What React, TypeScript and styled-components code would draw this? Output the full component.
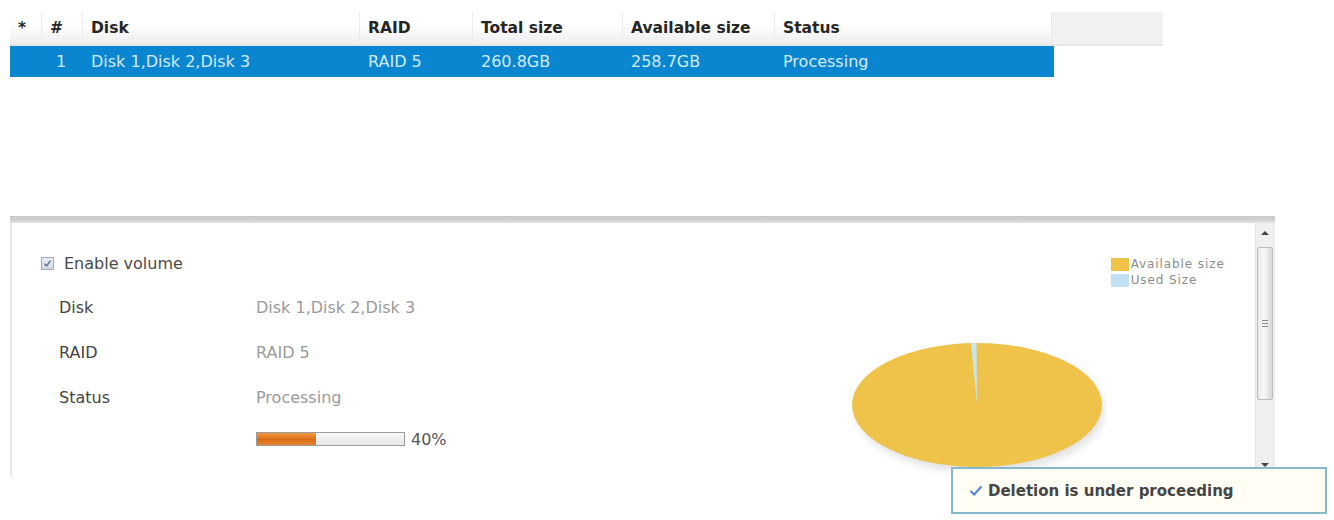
import React from 'react';
import styled, { createGlobalStyle } from 'styled-components';

const GlobalStyle = createGlobalStyle`
  body {
    margin: 0;
    background: #fff;
    font-family: "DejaVu Sans", Verdana, sans-serif;
  }
`;

const Page = styled.div`
  position: relative;
  width: 1334px;
  height: 520px;
  padding: 12px 0 0 10px;
  box-sizing: border-box;
  overflow: hidden;
`;

// ---- volume list ----

const ListArea = styled.div`
  height: 204px;
  width: 1153px;
`;

const cols = '32px 41px 277px 113px 150px 152px 277px 111px';

const HeadRow = styled.div`
  display: grid;
  grid-template-columns: ${cols};
  height: 32px;
  border-bottom: 2px solid #e6e6e6;
`;

const HeadCell = styled.div<{ $filler?: boolean }>`
  display: flex;
  align-items: center;
  padding-left: 8px;
  font-size: 15.5px;
  font-weight: bold;
  color: #262626;
  background: ${(p) => (p.$filler ? '#f1f1f1' : 'linear-gradient(#ffffff, #ffffff 40%, #ededed)')};
  border-right: 1px solid ${(p) => (p.$filler ? 'transparent' : '#ececec')};
`;

const BodyRow = styled.div<{ $selected?: boolean }>`
  display: grid;
  grid-template-columns: 32px 41px 277px 113px 150px 152px 279px;
  width: 1044px;
  height: 31px;
  background: ${(p) => (p.$selected ? '#0a86d0' : 'transparent')};
  color: ${(p) => (p.$selected ? '#d3ebf8' : '#333')};
  font-size: 16px;
`;

const BodyCell = styled.div<{ $pad?: number }>`
  display: flex;
  align-items: center;
  padding-left: ${(p) => p.$pad ?? 8}px;
  white-space: nowrap;
`;

// ---- splitter + detail panel ----

const Splitter = styled.div`
  width: 1265px;
  height: 7px;
  background: linear-gradient(#c9c9c9, #d2d2d2 60%, #e4e4e4);
`;

const DetailPanel = styled.div`
  display: flex;
  width: 1265px;
  height: 254px;
  border-left: 2px solid #e8e8e8;
  box-sizing: border-box;
`;

const Info = styled.div`
  width: 844px;
  padding: 32px 0 0 29px;
  box-sizing: border-box;
  color: #4a4a4a;
  font-size: 16px;
`;

const CheckRow = styled.label`
  display: flex;
  align-items: center;
  gap: 10px;
  height: 16px;
`;

const CheckBox = styled.span`
  width: 11px;
  height: 11px;
  border: 1px solid #a8a8b4;
  background: linear-gradient(#e9edf3, #d3d9e3);
  display: flex;
  align-items: center;
  justify-content: center;
`;

const Fields = styled.div`
  display: grid;
  grid-template-columns: 197px auto;
  grid-template-rows: 45px 45px 45px 38px;
  align-items: center;
  margin: 14px 0 0 18px;
`;

const FieldLabel = styled.div`
  color: #444;
`;

const FieldValue = styled.div`
  color: #9a9a9a;
`;

const ProgressWrap = styled.div`
  display: flex;
  align-items: center;
  gap: 6px;
  color: #555;
`;

const Track = styled.div`
  width: 147px;
  height: 12px;
  border: 1px solid #9c9c9c;
  background: linear-gradient(#f8f8f8, #e6e6e6);
`;

const Fill = styled.div`
  height: 100%;
  background: linear-gradient(#f19a45, #d96c14 55%, #e98432);
`;

const ChartArea = styled.div`
  display: flex;
  align-items: flex-start;
  width: 410px;
`;

const Pie = styled.svg`
  margin-top: 115px;
  flex: none;
`;

const Legend = styled.div`
  margin: 33px 0 0 4px;
  font-size: 12px;
  letter-spacing: 0.9px;
  color: #8c8c8c;
  line-height: 16px;
`;

const LegendItem = styled.div`
  display: flex;
  align-items: center;
  gap: 2px;
`;

const Swatch = styled.span<{ $color: string }>`
  width: 18px;
  height: 13px;
  background: ${(p) => p.$color};
`;

const ScrollBar = styled.div`
  position: relative;
  width: 19px;
  height: 100%;
  background: #efefef;
  border-left: 1px solid #e2e2e2;
  flex: none;
`;

const Arrow = styled.div<{ $down?: boolean }>`
  position: absolute;
  left: 5px;
  ${(p) => (p.$down ? 'top: 240px;' : 'top: 8px;')}
  width: 0;
  height: 0;
  border-left: 4px solid transparent;
  border-right: 4px solid transparent;
  ${(p) => (p.$down ? 'border-top: 4px solid #444;' : 'border-bottom: 4px solid #444;')}
`;

const Thumb = styled.div`
  position: absolute;
  left: 1px;
  top: 24px;
  width: 16px;
  height: 153px;
  border: 1px solid #bdbdbd;
  border-radius: 2px;
  box-sizing: border-box;
  background: linear-gradient(90deg, #e9e9e9, #fafafa 40%, #d6d6d6);
  display: flex;
  flex-direction: column;
  justify-content: center;
  align-items: center;
  gap: 2px;
`;

const Grip = styled.span`
  width: 6px;
  height: 1px;
  background: #8a8a8a;
`;

// ---- notification ----

const Toast = styled.div`
  position: absolute;
  left: 951px;
  top: 467px;
  width: 376px;
  height: 47px;
  box-sizing: border-box;
  border: 2px solid #84b9c9;
  background: #fffdf4;
  display: flex;
  align-items: center;
  padding-left: 17px;
  gap: 6px;
  font-size: 15px;
  font-weight: bold;
  color: #454545;
`;

const headers = ['*', '#', 'Disk', 'RAID', 'Total size', 'Available size', 'Status'];

export default function App() {
  const progress = 40;
  return (
    <Page>
      <GlobalStyle />
      <ListArea>
        <HeadRow>
          {headers.map((h) => (
            <HeadCell key={h}>{h}</HeadCell>
          ))}
          <HeadCell $filler />
        </HeadRow>
        <BodyRow $selected>
          <BodyCell />
          <BodyCell $pad={14}>1</BodyCell>
          <BodyCell>Disk 1,Disk 2,Disk 3</BodyCell>
          <BodyCell>RAID 5</BodyCell>
          <BodyCell>260.8GB</BodyCell>
          <BodyCell>258.7GB</BodyCell>
          <BodyCell>Processing</BodyCell>
        </BodyRow>
      </ListArea>

      <Splitter />

      <DetailPanel>
        <Info>
          <CheckRow>
            <CheckBox>
              <svg width="9" height="9" viewBox="0 0 9 9">
                <path d="M1.5 4.8 L3.5 7 L7.5 1.8" fill="none" stroke="#5a6f8e" strokeWidth="1.4" />
              </svg>
            </CheckBox>
            Enable volume
          </CheckRow>
          <Fields>
            <FieldLabel>Disk</FieldLabel>
            <FieldValue>Disk 1,Disk 2,Disk 3</FieldValue>
            <FieldLabel>RAID</FieldLabel>
            <FieldValue>RAID 5</FieldValue>
            <FieldLabel>Status</FieldLabel>
            <FieldValue>Processing</FieldValue>
            <span />
            <ProgressWrap>
              <Track>
                <Fill style={{ width: `${progress}%` }} />
              </Track>
              {progress}%
            </ProgressWrap>
          </Fields>
        </Info>

        <ChartArea>
          <Pie width="258" height="142" viewBox="0 0 258 142">
            <defs>
              <filter id="pieShadow" x="-20%" y="-20%" width="140%" height="160%">
                <feGaussianBlur stdDeviation="4" />
              </filter>
            </defs>
            <ellipse cx="131" cy="72" rx="124" ry="62" fill="#b8b8b8" opacity="0.45" filter="url(#pieShadow)" />
            <ellipse cx="128" cy="67" rx="125" ry="62" fill="#efc34a" />
            <path d="M128 67 L122 5 L127.5 5 Z" fill="#c8e3f2" />
          </Pie>
          <Legend>
            <LegendItem>
              <Swatch $color="#efc34a" />
              Available size
            </LegendItem>
            <LegendItem>
              <Swatch $color="#c2e0f3" />
              Used Size
            </LegendItem>
          </Legend>
        </ChartArea>

        <ScrollBar>
          <Arrow />
          <Thumb>
            <Grip />
            <Grip />
            <Grip />
          </Thumb>
          <Arrow $down />
        </ScrollBar>
      </DetailPanel>

      <Toast>
        <svg width="12" height="10" viewBox="0 0 12 10">
          <path d="M1 5.5 L4.2 8.5 L11 1" fill="none" stroke="#4f82d1" strokeWidth="2" strokeLinecap="round" />
        </svg>
        Deletion is under proceeding
      </Toast>
    </Page>
  );
}
